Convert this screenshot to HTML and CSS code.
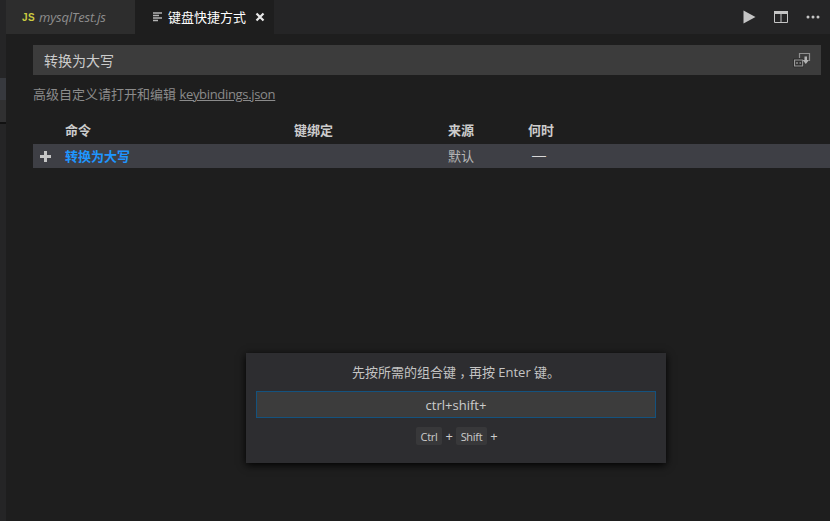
FILE: index.html
```html
<!DOCTYPE html>
<html lang="zh">
<head>
<meta charset="utf-8">
<title>键盘快捷方式</title>
<link rel="stylesheet" href="styles.css">
</head>
<body>
<div class="app">
  <aside class="strip">
    <div class="s s1"></div>
    <div class="s s2"></div>
    <div class="s s3"></div>
    <div class="s s4"></div>
  </aside>
  <main class="main">
    <header class="tabbar">
      <div class="tab tab-off"><span class="js">JS</span><span class="tname">mysqlTest.js</span></div>
      <div class="tab tab-on">
        <svg class="ticon" width="10" height="10" viewBox="0 0 10 10"><path d="M0 1h9M0 3.5h6M0 6h9M0 8.5h5" stroke="#b4b4b4" stroke-width="1.4" fill="none"/></svg>
        <span class="tlabel">键盘快捷方式</span>
        <svg class="tclose" width="10" height="10" viewBox="0 0 10 10"><path d="M1.5 1.5l7 7M8.5 1.5l-7 7" stroke="#e8e8e8" stroke-width="2.2" fill="none"/></svg>
      </div>
      <div class="actions">
        <svg width="13" height="14" viewBox="0 0 13 14"><path d="M.5.5L12.5 7 .5 13.5z" fill="#c5c5c5"/></svg>
        <svg width="14" height="12" viewBox="0 0 14 12"><path d="M.5.5h13v11H.5zM7 3v8.5" stroke="#c5c5c5" fill="none"/><path d="M0 0h14v3H0z" fill="#c5c5c5"/></svg>
        <svg width="14" height="4" viewBox="0 0 14 4"><circle cx="2" cy="2" r="1.5" fill="#c5c5c5"/><circle cx="7" cy="2" r="1.5" fill="#c5c5c5"/><circle cx="12" cy="2" r="1.5" fill="#c5c5c5"/></svg>
      </div>
    </header>
    <section class="editor">
      <div class="search">
        <span>转换为大写</span>
        <svg class="sicon" width="18" height="16" viewBox="0 0 18 16"><path d="M6.5 6V1.5h10V9" stroke="#8f8f8f" stroke-width="1.2" fill="none"/><path d="M.5 7.2h10v7.6H.5z" stroke="#222" stroke-width="1" fill="none"/><path d="M1.5 8h8.2v6H1.5z" stroke="#9a9a9a" stroke-width="1.2" fill="#333"/><path d="M3 11h2M6.5 11h1.5" stroke="#bbb" stroke-width="1.2"/><path d="M11.5 4.5h2.5V8h2l-3.2 4L9.6 8h1.9z" fill="#b4b4b4"/></svg>
      </div>
      <p class="hint">高级自定义请打开和编辑 <a class="link">keybindings.json</a></p>
      <div class="grid head">
        <span class="c-cmd">命令</span><span>键绑定</span><span>来源</span><span>何时</span>
      </div>
      <div class="grid row">
        <svg class="plus" width="11" height="11" viewBox="0 0 11 11"><path d="M5.5 0v11M0 5.5h11" stroke="#c5c5c5" stroke-width="3" fill="none"/></svg>
        <span class="c-cmd cmd">转换为大写</span><span></span><span class="src">默认</span><span class="when">—</span>
      </div>
    </section>
  </main>
  <div class="dialog">
    <div class="dtitle">先按所需的组合键<span class="comma" lang="zh-Hant">，</span>再按 Enter 键。</div>
    <div class="dinput">ctrl+shift+</div>
    <div class="keys"><kbd>Ctrl</kbd><span class="kplus">+</span><kbd>Shift</kbd><span class="kplus">+</span></div>
  </div>
</div>
</body>
</html>
```
FILE: styles.css
```css
* { box-sizing: border-box; }
html, body { margin: 0; height: 100%; overflow: hidden; }
body {
  background: #1e1e1e;
  color: #cccccc;
  font-family: "Open Sans", "Noto Sans CJK SC", sans-serif;
  font-size: 13px;
}
.app { position: relative; display: flex; width: 830px; height: 521px; }
.strip { width: 6px; display: flex; flex-direction: column; background: #252526; flex: none; }
.s { flex: none; }
.s1 { height: 78px; background: #252526; }
.s2 { height: 22px; background: #37393e; }
.s3 { height: 24px; background: #303031; border-bottom: 2px solid #111; }
.main { flex: 1; display: flex; flex-direction: column; min-width: 0; }
.tabbar { height: 34px; background: #252526; display: flex; align-items: stretch; flex: none; }
.tab { display: flex; align-items: center; }
.tab-off { width: 129px; background: #2d2d2d; padding-left: 16px; }
.js { color: #cbcb41; font-size: 10px; font-weight: 700; font-family: "Liberation Sans", sans-serif; width: 17px; letter-spacing: .5px; }
.tname { color: #8d8d8d; font-style: italic; font-size: 13px; letter-spacing: -.17px; }
.tab-on { width: 139px; background: #1e1e1e; padding-left: 18px; }
.ticon { margin-right: 5px; }
.tlabel { color: #ffffff; font-size: 13px; width: 78px; font-family: "Noto Sans CJK SC", sans-serif; padding-bottom: 2px; }
.tclose { margin-left: 9px; }
.actions { margin-left: auto; display: flex; align-items: center; gap: 18px; padding-right: 10px; }
.editor { flex: 1; padding: 11px 9px 0 27px; background: #1e1e1e; }
.search {
  height: 30px; background: #3c3c3c; display: flex; align-items: center; justify-content: space-between;
  padding: 0 10px 0 11px; font-size: 14px; color: #cccccc; font-family: "Noto Sans CJK SC", sans-serif;
}
.sicon { flex: none; }
.hint { margin: 9px 0 0; height: 20px; line-height: 20px; color: #8b8b8b; font-size: 13px; }
.link { color: #8b8b8b; text-decoration: underline; letter-spacing: -.32px; }
.grid { display: grid; grid-template-columns: 32px 229px 154px 80px 1fr; align-items: center; }
.head { height: 24px; margin-top: 16px; padding-bottom: 6px; font-weight: 700; color: #cccccc; font-family: "Noto Sans CJK SC", sans-serif; }
.head .c-cmd { grid-column: 2; }
.row { height: 24px; padding-bottom: 2px; background: #3e3f45; margin-right: -9px; font-family: "Noto Sans CJK SC", sans-serif; }
.plus { margin: 2px 0 0 7px; }
.cmd { color: #1e96ff; font-weight: 700; }
.src { color: #b8b8b8; }
.when { margin-left: 4px; color: #d8d8d8; font-family: "Liberation Sans", sans-serif; font-size: 14px; }
.dialog {
  position: absolute; left: 246px; top: 353px; width: 420px; height: 110px;
  background: #2d2d30; box-shadow: 0 2px 8px #000; padding: 10px;
  display: flex; flex-direction: column; align-items: center;
}
.dtitle { height: 18px; line-height: 18px; font-size: 13px; color: #c4c4c4; }
.comma { font-family: "Noto Sans CJK TC", sans-serif; line-height: 1; vertical-align: -4px; }
.dinput {
  width: 400px; height: 27px; margin-top: 10px; background: #3c3c3c; border: 1px solid #14527e;
  display: flex; align-items: center; justify-content: center; font-size: 13px; color: #cccccc;
}
.keys { display: flex; align-items: center; gap: 3px; margin-top: 9px; height: 18px; font-size: 11px; color: #cccccc; padding-left: 1px; letter-spacing: -.3px; }
.kplus { font-size: 13px; color: #cccccc; }
kbd { background: #38383a; border-radius: 2px; padding: 0 5px; height: 18px; line-height: 18px; font: inherit; display: inline-flex; align-items: center; }
```
